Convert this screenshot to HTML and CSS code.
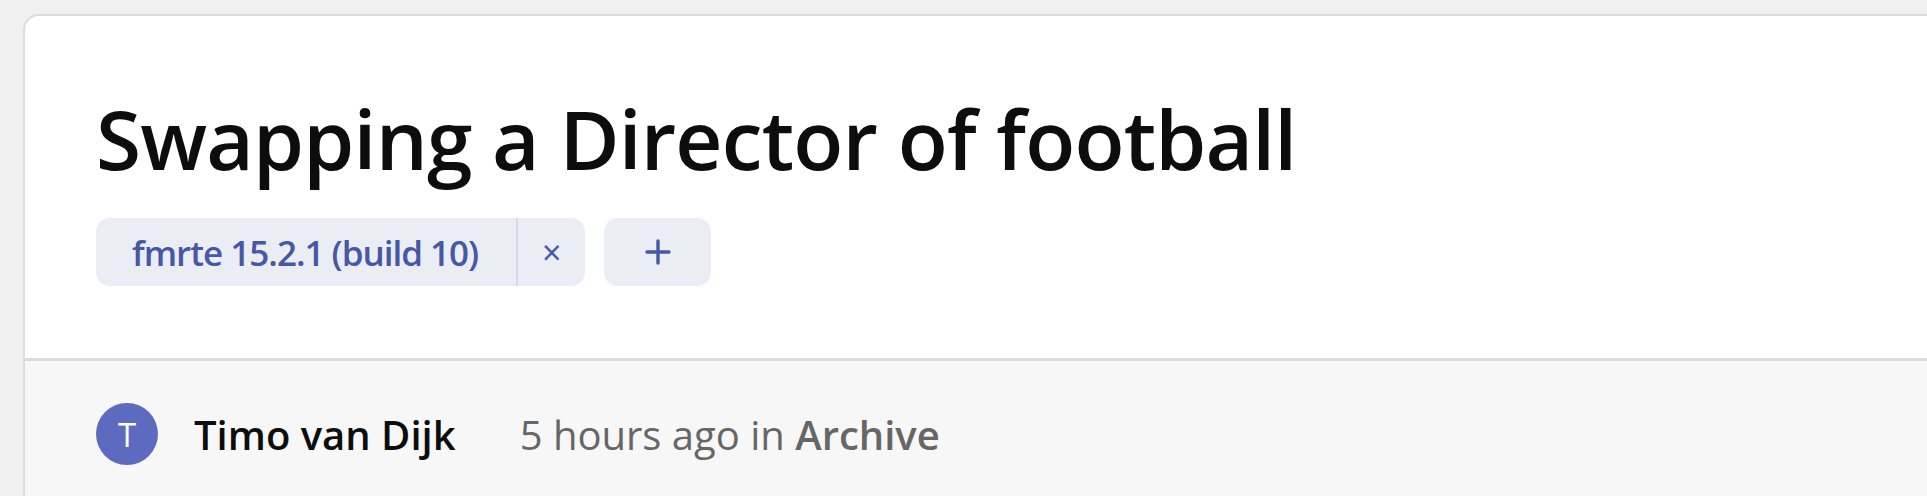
FILE: index.html
```html
<!DOCTYPE html>
<html lang="en">
<head>
<meta charset="utf-8">
<title>Swapping a Director of football</title>
<link rel="stylesheet" href="styles.css">
</head>
<body>
<div class="page">
  <article class="card">
    <header class="card-header">
      <h1 class="title">Swapping a Director of football</h1>
      <div class="tags">
        <div class="tag">
          <span class="tag-label">fmrte 15.2.1 (build 10)</span>
          <span class="tag-remove">×</span>
        </div>
        <div class="tag-add">
          <svg width="26" height="26" viewBox="0 0 26 26" aria-hidden="true">
            <path d="M13 2v22M2 13h22" stroke="currentColor" stroke-width="3.4" stroke-linecap="round" fill="none"/>
          </svg>
        </div>
      </div>
    </header>
    <footer class="card-footer">
      <div class="avatar">T</div>
      <span class="author">Timo van Dijk</span>
      <span class="meta">5 hours ago in <b class="category">Archive</b></span>
    </footer>
  </article>
</div>
</body>
</html>
```
FILE: styles.css
```css
html, body {
  margin: 0;
  padding: 0;
  height: 100%;
  overflow: hidden;
}
body {
  background: #f0f0f0;
  font-family: "Open Sans", "Noto Sans", sans-serif;
}
.page {
  padding: 14px 0 0 23px;
}
.card {
  margin-right: -60px;
  background: #ffffff;
  border: 2px solid #dcdcdc;
  border-radius: 16px;
  overflow: hidden;
}
.card-header {
  padding: 73px 71px 72px;
  border-bottom: 3px solid #dcdcdc;
}
.title {
  margin: 0;
  font-size: 82px;
  line-height: 1.2;
  font-weight: 600;
  color: #0d0d0d;
  letter-spacing: -0.8px;
}
.tags {
  display: flex;
  gap: 19px;
  margin-top: 31px;
}
.tag, .tag-add {
  display: flex;
  align-items: stretch;
  height: 68px;
  background: #ebedf5;
  border-radius: 14px;
  color: #4557a5;
}
.tag-label {
  display: flex;
  align-items: center;
  padding: 0 38px 0 36px;
  font-size: 35px;
  font-weight: 600;
  letter-spacing: -1px;
  border-right: 2px solid #d5d8ea;
}
.tag-remove {
  display: flex;
  align-items: center;
  justify-content: center;
  width: 67px;
  font-size: 34px;
  font-weight: 400;
}
.tag-add {
  width: 107px;
  justify-content: center;
  align-items: center;
}
.card-footer {
  display: flex;
  align-items: center;
  background: #f7f7f7;
  padding: 42px 71px 60px;
}
.avatar {
  width: 62px;
  height: 62px;
  border-radius: 50%;
  background: #5c6bc0;
  color: #ffffff;
  display: flex;
  align-items: center;
  justify-content: center;
  font-size: 33px;
  font-weight: 400;
}
.author {
  margin-left: 36px;
  font-size: 40px;
  font-weight: 600;
  color: #0d0d0d;
}
.meta {
  margin-left: 64px;
  font-size: 40px;
  font-weight: 400;
  color: #666666;
}
.category {
  font-weight: 600;
}
```
